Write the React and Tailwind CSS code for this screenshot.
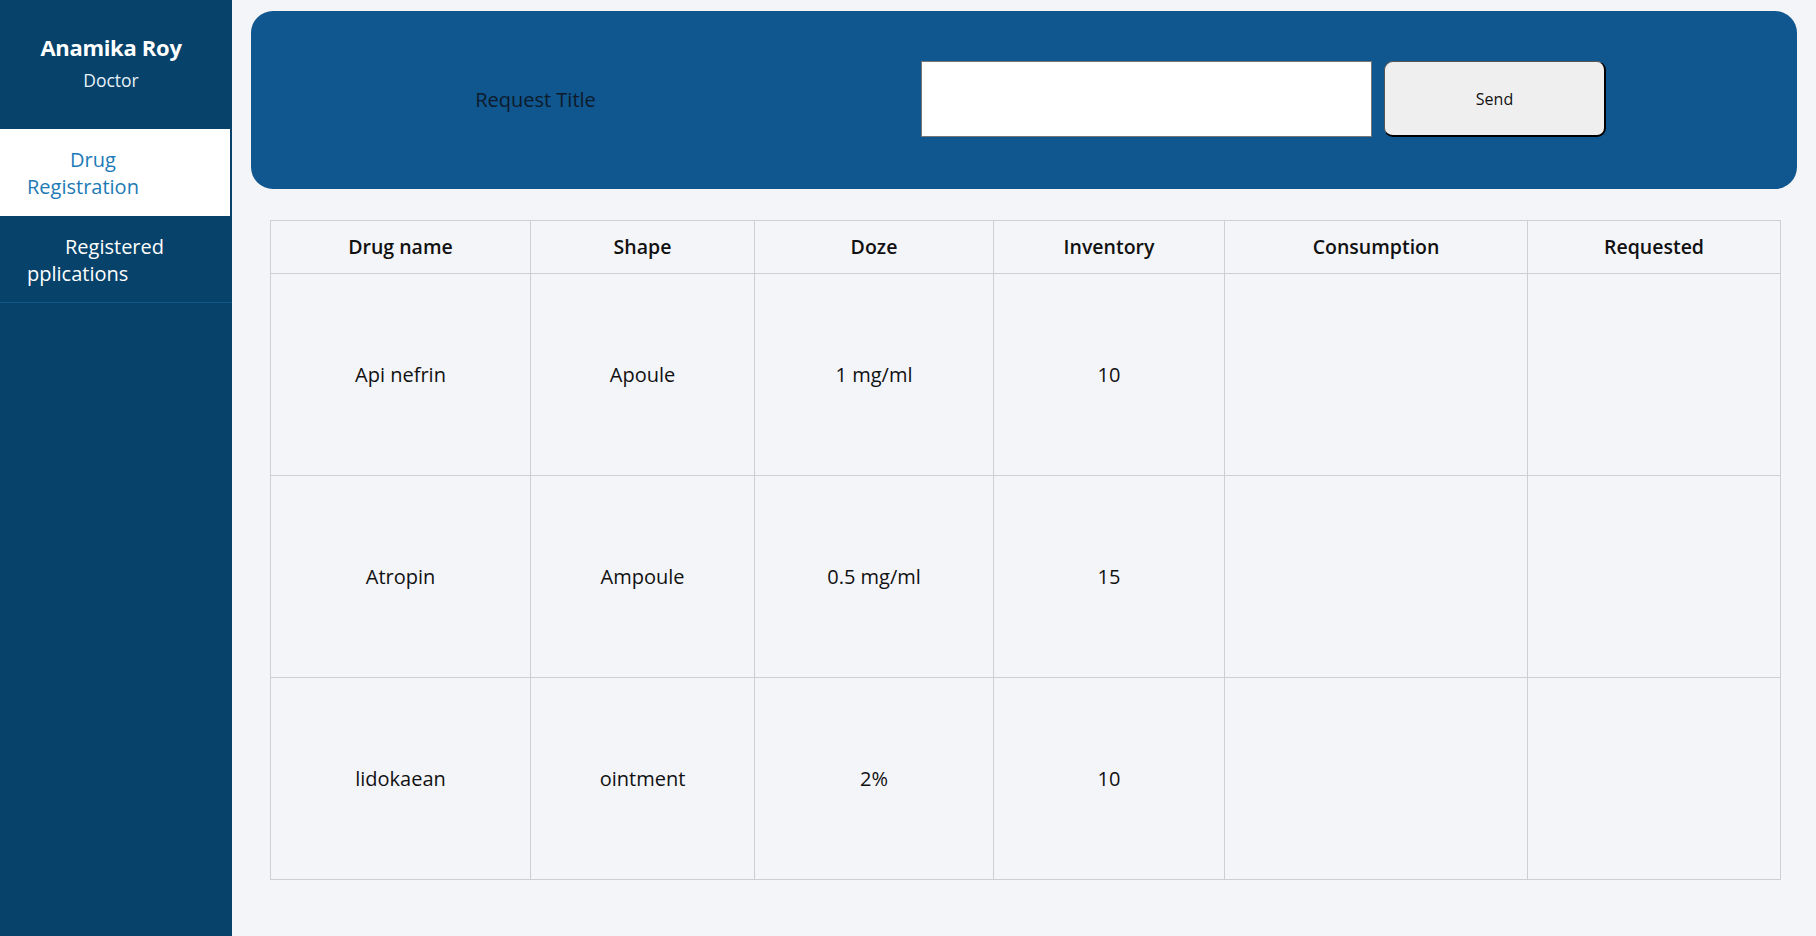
import { useState } from 'react';

const drugs = [
  { name: 'Api nefrin', shape: 'Apoule', doze: '1 mg/ml', inventory: '10' },
  { name: 'Atropin', shape: 'Ampoule', doze: '0.5 mg/ml', inventory: '15' },
  { name: 'lidokaean', shape: 'ointment', doze: '2%', inventory: '10' },
];

const cols = ['Drug name', 'Shape', 'Doze', 'Inventory', 'Consumption', 'Requested'];

export default function App() {
  const [title, setTitle] = useState('');

  return (
    <div className="flex min-h-[936px] bg-[#f4f5f9] font-['Open_Sans',sans-serif]">
      <aside className="w-[232px] shrink-0 bg-[#06426a]">
        <div className="h-[129px] pt-[31px] text-center text-white pr-[10px]">
          <h2 className="text-[22px] font-bold leading-[32px] tracking-[-0.3px]">Anamika Roy</h2>
          <p className="text-[17.5px] leading-[24px] mt-[5px] text-[#e6f2fb]">Doctor</p>
        </div>
        <nav>
          <a className="block h-[87px] bg-white pt-[17px] pl-[27px] text-[20px] leading-[27px] text-[#1d7ab6] mr-[2px]">
            <span className="block pl-[43px]">Drug</span>
            <span className="block">Registration</span>
          </a>
          <a className="block h-[87px] pt-[17px] pl-[27px] text-[20px] leading-[27px] text-white border-b border-[#11578a]">
            <span className="block pl-[38px]">Registered</span>
            <span className="block">pplications</span>
          </a>
        </nav>
      </aside>

      <main className="flex-1 pt-[11px] px-[19px]">
        <div className="h-[178px] rounded-[22px] bg-[#10568f] flex items-center">
          <div className="w-[569px] text-center text-[20px] text-[#0d1b2a]">Request Title</div>
          <input
            value={title}
            onChange={e => setTitle(e.target.value)}
            className="ml-[101px] -mt-[2px] w-[451px] h-[76px] bg-white border border-[#767676] outline-none px-2"
          />
          <button className="ml-[12px] -mt-[2px] w-[222px] h-[76px] rounded-[9px] bg-[#efefef] border border-[#555] border-r-2 border-b-2 border-r-black border-b-black text-[16px] text-[#111]">
            Send
          </button>
        </div>

        <table className="mt-[31px] ml-[19px] w-[1510px] table-fixed border-collapse text-center text-[#111]">
          <colgroup>
            <col className="w-[260px]" />
            <col className="w-[224px]" />
            <col className="w-[239px]" />
            <col className="w-[231px]" />
            <col className="w-[303px]" />
            <col className="w-[253px]" />
          </colgroup>
          <thead>
            <tr className="h-[53px]">
              {cols.map(c => (
                <th key={c} className="border border-[#cfcfcf] text-[19.5px] font-semibold">{c}</th>
              ))}
            </tr>
          </thead>
          <tbody>
            {drugs.map(d => (
              <tr key={d.name} className="h-[202px] text-[20px]">
                <td className="border border-[#cfcfcf]">{d.name}</td>
                <td className="border border-[#cfcfcf]">{d.shape}</td>
                <td className="border border-[#cfcfcf]">{d.doze}</td>
                <td className="border border-[#cfcfcf]">{d.inventory}</td>
                <td className="border border-[#cfcfcf]"></td>
                <td className="border border-[#cfcfcf]"></td>
              </tr>
            ))}
          </tbody>
        </table>
      </main>
    </div>
  );
}
